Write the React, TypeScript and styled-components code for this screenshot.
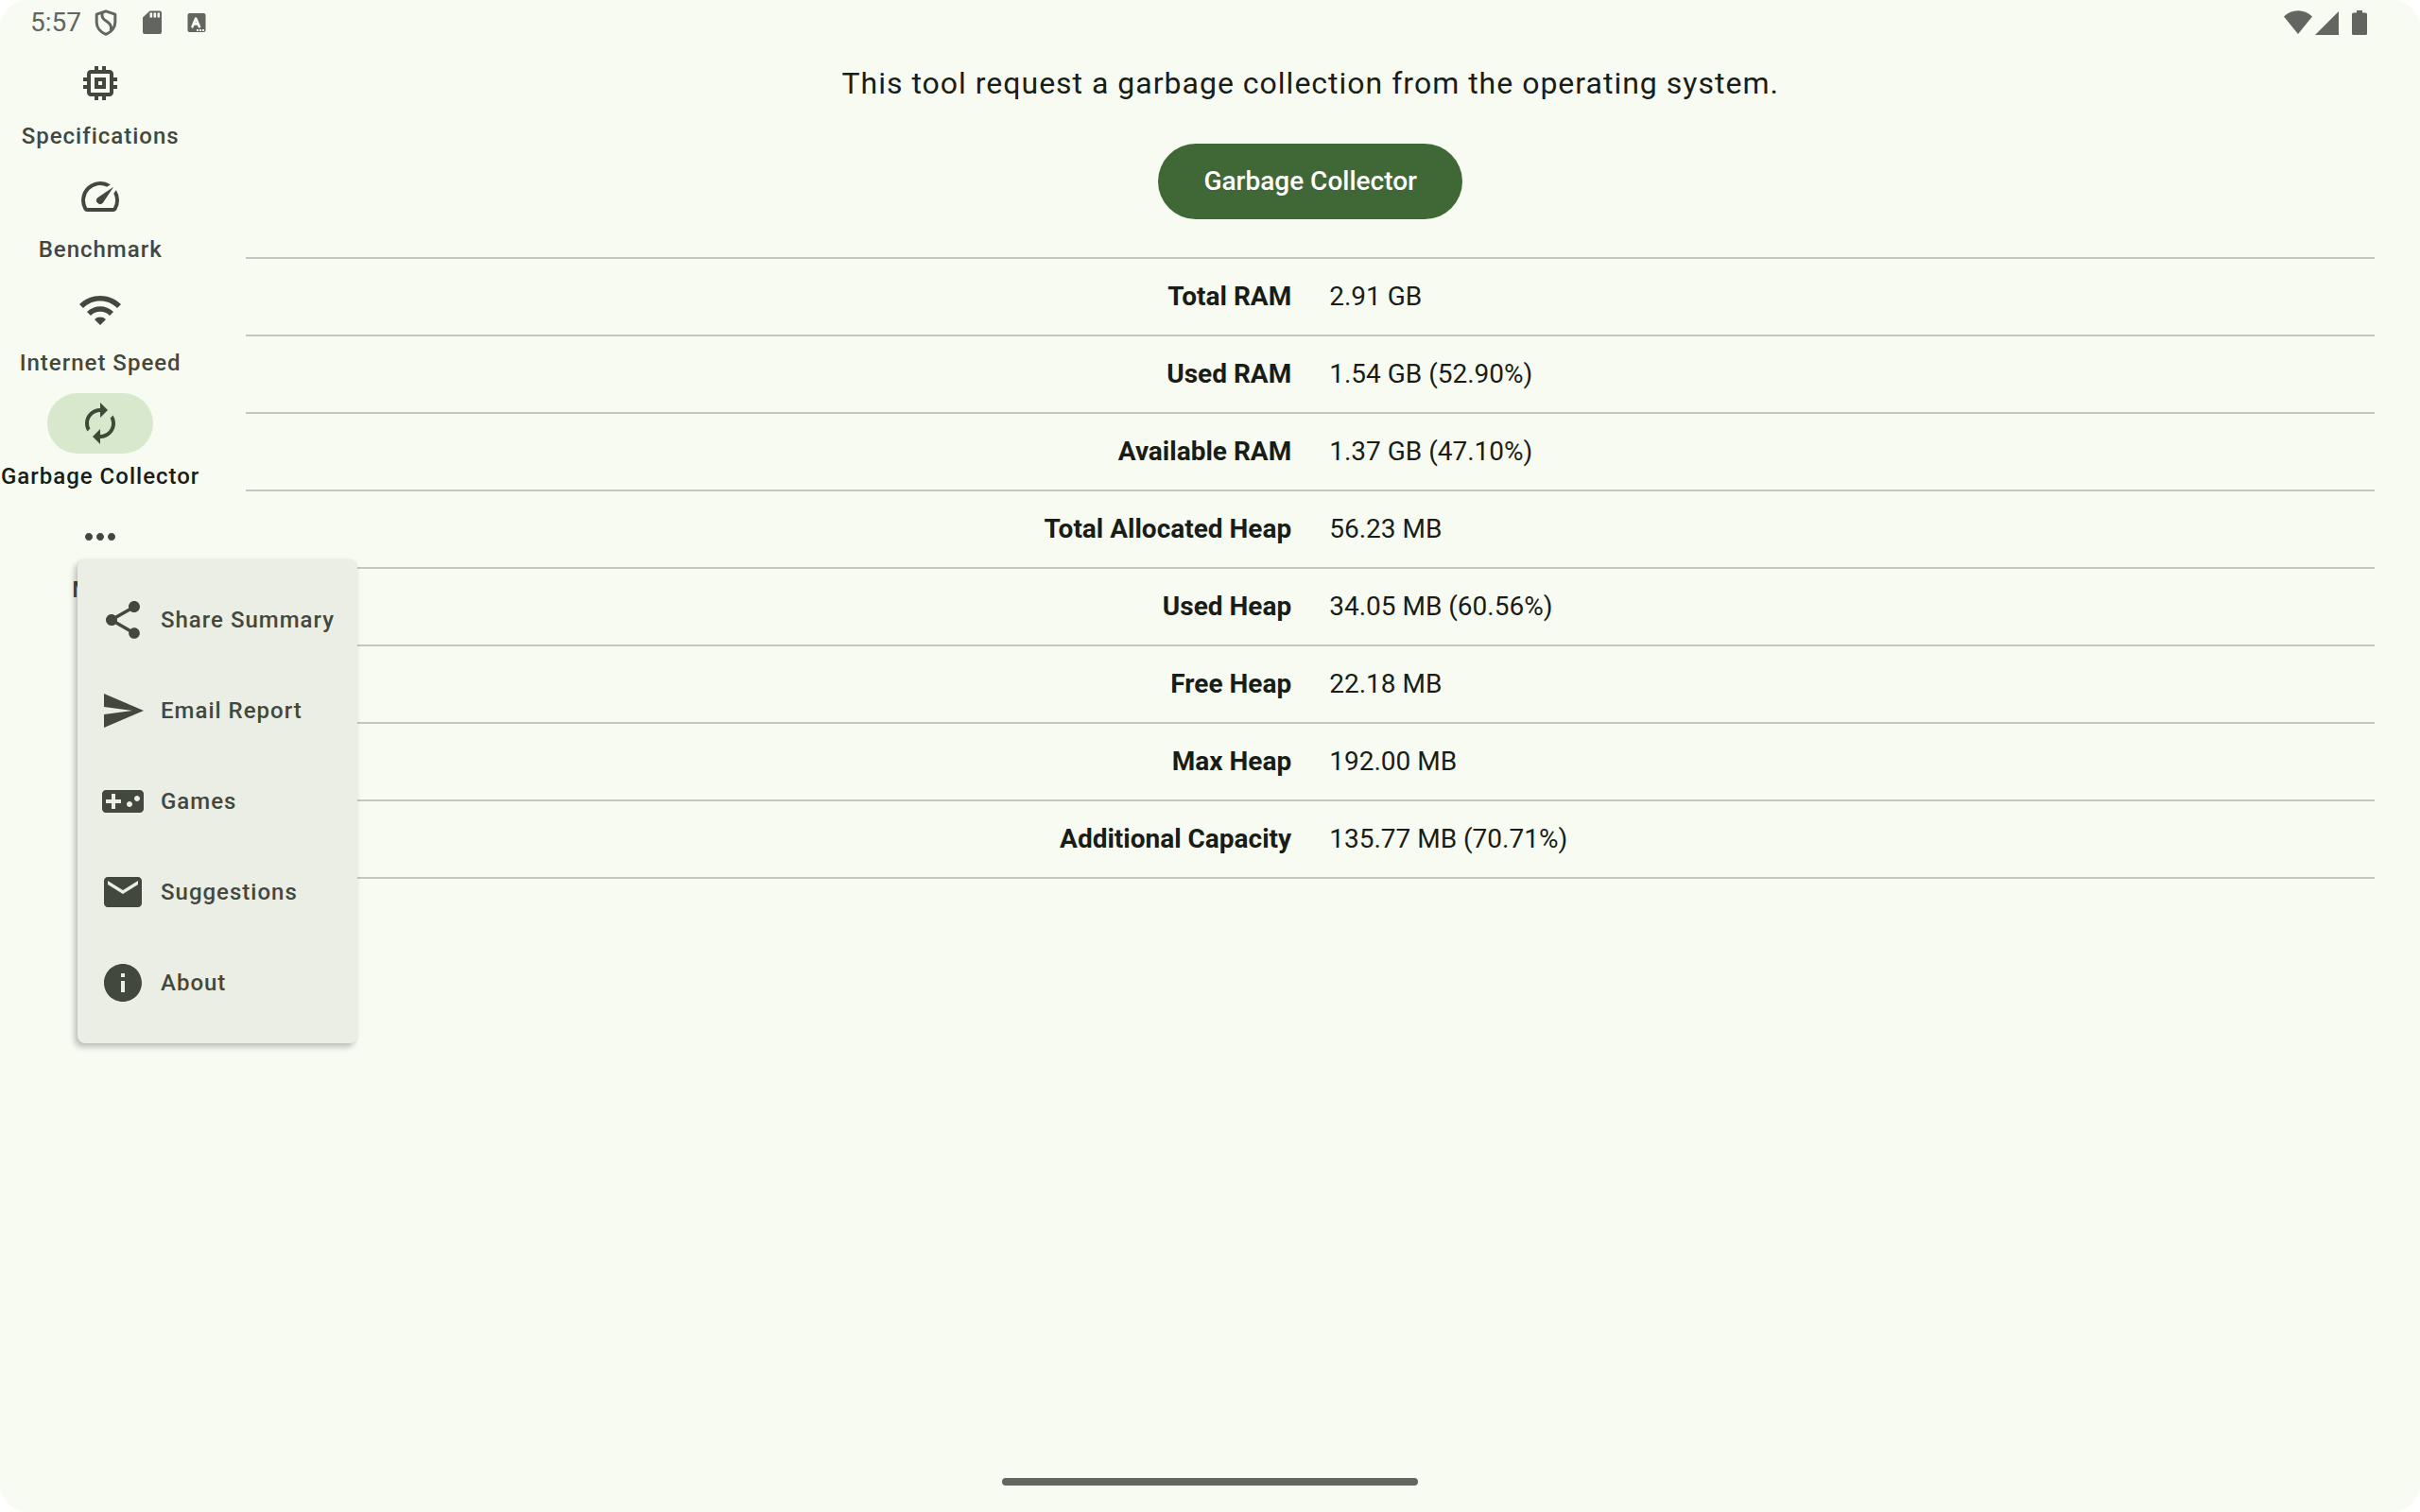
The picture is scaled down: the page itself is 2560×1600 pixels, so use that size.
import React, { useState } from "react";
import styled, { createGlobalStyle } from "styled-components";
import type { IconType } from "react-icons";
import {
  MdAutorenew,
  MdEmail,
  MdInfo,
  MdMemory,
  MdMoreHoriz,
  MdSend,
  MdShare,
  MdSpeed,
  MdVideogameAsset,
  MdWifi,
} from "react-icons/md";

const color = {
  surface: "#f8fbf2",
  menu: "#ebeee5",
  text: "#191d17",
  muted: "#43483e",
  line: "#c3c8bc",
  primary: "#406836",
  onPrimary: "#ffffff",
  indicator: "#d7e8cd",
  system: "#636561",
};

const GlobalStyle = createGlobalStyle`
  *, *::before, *::after { box-sizing: border-box; }
  body {
    margin: 0;
    background: #ffffff;
    color: ${color.text};
    font-family: Roboto, "Liberation Sans", sans-serif;
  }
  button { font: inherit; color: inherit; border: 0; padding: 0; background: none; cursor: pointer; }
`;

const Screen = styled.div`
  display: flex;
  flex-direction: column;
  min-height: 100vh;
  border-radius: 30px;
  background: ${color.surface};
`;

const StatusBar = styled.header`
  display: flex;
  align-items: center;
  justify-content: space-between;
  height: 48px;
  padding: 0 56px 0 32px;
  color: ${color.system};
`;

const StatusGroup = styled.div<{ $gap: number }>`
  display: flex;
  align-items: center;
  gap: ${(p) => p.$gap}px;
`;

const Clock = styled.time`
  font-size: 28px;
  line-height: 32px;
`;

const Body = styled.div`
  display: flex;
  flex: 1;
`;

const Rail = styled.nav`
  padding: 8px 1px 0;
`;

const RailList = styled.ul`
  display: flex;
  flex-direction: column;
  gap: 16px;
  margin: 0;
  padding: 0;
  list-style: none;
`;

const RailItem = styled.li`
  position: relative;
`;

const RailButton = styled.button<{ $active?: boolean }>`
  display: flex;
  flex-direction: column;
  align-items: center;
  gap: 8px;
  width: 100%;
  color: ${(p) => (p.$active ? color.text : color.muted)};
`;

const Indicator = styled.span<{ $active?: boolean }>`
  display: flex;
  align-items: center;
  justify-content: center;
  width: 112px;
  height: 64px;
  border-radius: 32px;
  color: ${(p) => (p.$active ? "#3c4b37" : color.muted)};
  background: ${(p) => (p.$active ? color.indicator : "transparent")};
`;

const Label = styled.span`
  font-size: 24px;
  font-weight: 500;
  line-height: 32px;
  letter-spacing: 1px;
  white-space: nowrap;
`;

const Menu = styled.div`
  position: absolute;
  top: 56px;
  left: 81px;
  z-index: 1;
  display: flex;
  flex-direction: column;
  padding: 16px 0;
  border-radius: 8px;
  background: ${color.menu};
  box-shadow: -3px 4px 6px rgba(0, 0, 0, 0.24), 0 0 3px rgba(0, 0, 0, 0.06);
`;

const MenuItem = styled.button`
  display: flex;
  align-items: center;
  gap: 16px;
  height: 96px;
  padding: 0 24px;
  color: ${color.muted};
`;

const Main = styled.main`
  display: flex;
  flex: 1;
  flex-direction: column;
  align-items: center;
  padding: 16px 48px 0;
`;

const Description = styled.p`
  margin: 0 0 40px;
  font-size: 32px;
  line-height: 48px;
  letter-spacing: 1px;
`;

const FilledButton = styled.button`
  height: 80px;
  margin-bottom: 40px;
  padding: 0 48px;
  border-radius: 40px;
  background: ${color.primary};
  color: ${color.onPrimary};
  font-size: 28px;
  font-weight: 500;
  line-height: 40px;
`;

const Table = styled.table`
  width: 100%;
  border-collapse: separate;
  border-spacing: 0;
  border-top: 2px solid ${color.line};
  table-layout: fixed;
  font-size: 28px;
  line-height: 40px;
`;

const Name = styled.th`
  padding: 20px;
  border-bottom: 2px solid ${color.line};
  font-weight: 700;
  text-align: right;
`;

const Value = styled.td`
  padding: 20px;
  border-bottom: 2px solid ${color.line};
`;

const GestureBar = styled.footer`
  display: flex;
  justify-content: center;
  padding-bottom: 28px;
`;

const Handle = styled.span`
  width: 440px;
  height: 8px;
  border-radius: 4px;
  background: ${color.system};
`;

const railItems: { label: string; Icon: IconType }[] = [
  { label: "Specifications", Icon: MdMemory },
  { label: "Benchmark", Icon: MdSpeed },
  { label: "Internet Speed", Icon: MdWifi },
  { label: "Garbage Collector", Icon: MdAutorenew },
];

const menuItems: { label: string; Icon: IconType }[] = [
  { label: "Share Summary", Icon: MdShare },
  { label: "Email Report", Icon: MdSend },
  { label: "Games", Icon: MdVideogameAsset },
  { label: "Suggestions", Icon: MdEmail },
  { label: "About", Icon: MdInfo },
];

const stats: [string, string][] = [
  ["Total RAM", "2.91 GB"],
  ["Used RAM", "1.54 GB (52.90%)"],
  ["Available RAM", "1.37 GB (47.10%)"],
  ["Total Allocated Heap", "56.23 MB"],
  ["Used Heap", "34.05 MB (60.56%)"],
  ["Free Heap", "22.18 MB"],
  ["Max Heap", "192.00 MB"],
  ["Additional Capacity", "135.77 MB (70.71%)"],
];

const ShieldIcon = () => (
  <svg width="24" height="28" viewBox="0 0 24 28" fill="none" stroke="currentColor" strokeWidth="3" aria-hidden="true">
    <path d="M12 1.8 21.800 5.200v8.300c0 5.600-3.800 10.600-9.800 12.800C6 24.100 2.200 19.100 2.200 13.500V5.200z" strokeLinejoin="round" />
    <path d="M8.300 3.200c-1.200 4 .2 6.600 3.700 8.800 4.600 2.900 6.400 5.200 5.200 10.200" />
  </svg>
);

const SdCardIcon = () => (
  <svg width="20" height="26" viewBox="0 0 20 26" aria-hidden="true">
    <path
      fill="currentColor"
      fillRule="evenodd"
      d="M7.500.5H18a2 2 0 0 1 2 2V23a2 2 0 0 1-2 2H2a2 2 0 0 1-2-2V7.500zM7.500 2.500v5h2.600v-5zm4 0v5h2.600v-5zm4 0v5H18v-5z"
    />
  </svg>
);

const LanguageIcon = () => (
  <svg width="20" height="20" viewBox="0 0 20 20" aria-hidden="true">
    <rect x=".5" width="19" height="20" rx="2" fill="currentColor" />
    <path
      d="M5.500 14.200 9.200 5.600 12.900 14.200M7.200 11.400h4"
      fill="none"
      stroke={color.surface}
      strokeWidth="2.600"
      strokeLinejoin="round"
      strokeLinecap="round"
    />
    <path d="M10 17h2v2h-2zM13 17h2v2h-2zM16 17h2v2h-2z" fill={color.surface} />
  </svg>
);

const WifiStatusIcon = () => (
  <svg width="30" height="26" viewBox="0 0 30 26" aria-hidden="true">
    <path d="M0 6.500C8.500-1.700 21.500-1.700 30 6.500L15 25z" fill="currentColor" />
  </svg>
);

const SignalIcon = () => (
  <svg width="25" height="25" viewBox="0 0 25 25" aria-hidden="true">
    <path d="M25 0v25H0z" fill="currentColor" />
  </svg>
);

const BatteryIcon = () => (
  <svg width="16" height="26" viewBox="0 0 16 26" aria-hidden="true">
    <path
      d="M5 0h6v2.500h3.500A1.500 1.500 0 0 1 16 4v20.500a1.500 1.500 0 0 1-1.500 1.500h-13A1.500 1.500 0 0 1 0 24.500V4a1.500 1.500 0 0 1 1.500-1.500H5z"
      fill="currentColor"
    />
  </svg>
);

export default function App() {
  const [selected, setSelected] = useState("Garbage Collector");
  const [menuOpen, setMenuOpen] = useState(true);

  return (
    <>
      <GlobalStyle />
      <Screen>
        <StatusBar>
          <StatusGroup $gap={14}>
            <Clock>5:57</Clock>
            <StatusGroup $gap={27}>
              <ShieldIcon />
              <SdCardIcon />
              <LanguageIcon />
            </StatusGroup>
          </StatusGroup>
          <StatusGroup $gap={14}>
            <StatusGroup $gap={3}>
              <WifiStatusIcon />
              <SignalIcon />
            </StatusGroup>
            <BatteryIcon />
          </StatusGroup>
        </StatusBar>

        <Body>
          <Rail aria-label="Tools">
            <RailList>
              {railItems.map(({ label, Icon }) => (
                <RailItem key={label}>
                  <RailButton
                    type="button"
                    $active={label === selected}
                    aria-current={label === selected ? "page" : undefined}
                    onClick={() => setSelected(label)}
                  >
                    <Indicator $active={label === selected}>
                      <Icon size={48} aria-hidden="true" />
                    </Indicator>
                    <Label>{label}</Label>
                  </RailButton>
                </RailItem>
              ))}
              <RailItem>
                <RailButton
                  type="button"
                  aria-haspopup="menu"
                  aria-expanded={menuOpen}
                  onClick={() => setMenuOpen(!menuOpen)}
                >
                  <Indicator>
                    <MdMoreHoriz size={48} aria-hidden="true" />
                  </Indicator>
                  <Label>More</Label>
                </RailButton>
                {menuOpen && (
                  <Menu role="menu">
                    {menuItems.map(({ label, Icon }) => (
                      <MenuItem key={label} type="button" role="menuitem" onClick={() => setMenuOpen(false)}>
                        <Icon size={48} aria-hidden="true" />
                        <Label>{label}</Label>
                      </MenuItem>
                    ))}
                  </Menu>
                )}
              </RailItem>
            </RailList>
          </Rail>

          <Main>
            <Description>This tool request a garbage collection from the operating system.</Description>
            <FilledButton type="button">Garbage Collector</FilledButton>
            <Table>
              <tbody>
                {stats.map(([name, value]) => (
                  <tr key={name}>
                    <Name scope="row">{name}</Name>
                    <Value>{value}</Value>
                  </tr>
                ))}
              </tbody>
            </Table>
          </Main>
        </Body>

        <GestureBar>
          <Handle />
        </GestureBar>
      </Screen>
    </>
  );
}
